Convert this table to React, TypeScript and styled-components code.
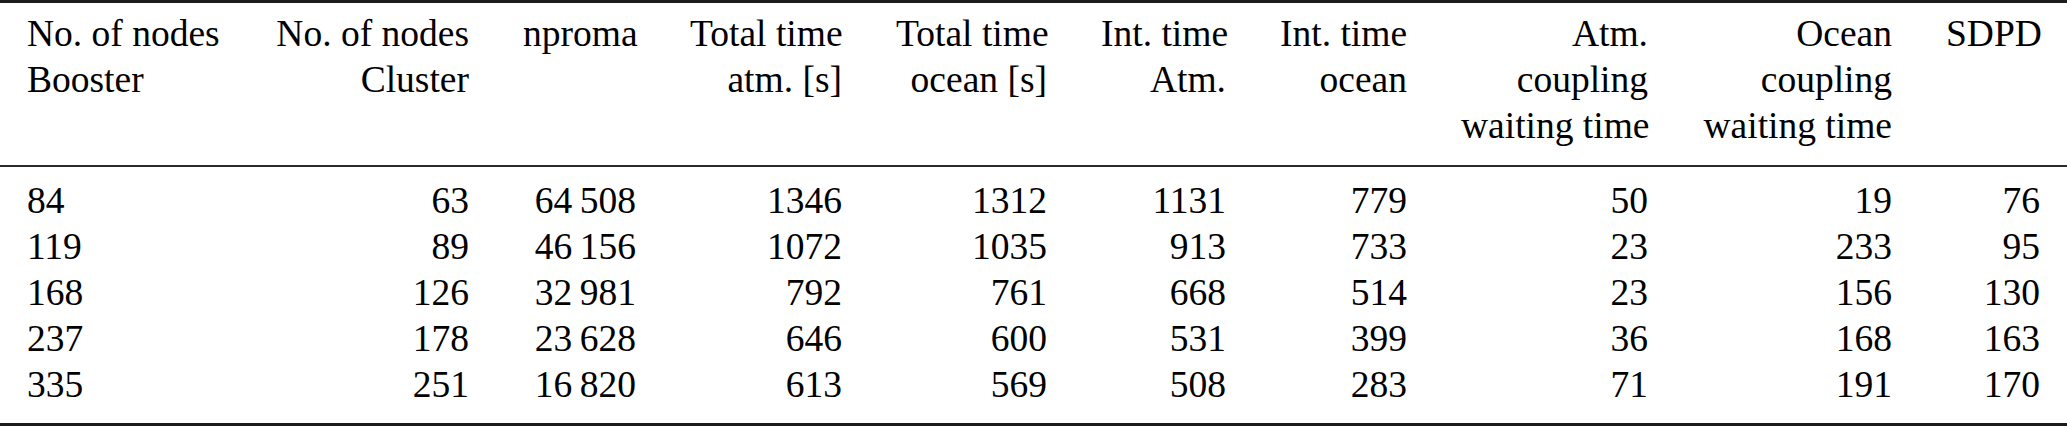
import React from 'react';
import styled, { createGlobalStyle } from 'styled-components';

const SERIF = '"Liberation Serif", "Times New Roman", serif';
const RULE = '#1c1c1c';

const GlobalStyle = createGlobalStyle`
  html, body {
    margin: 0;
    padding: 0;
    background: #ffffff;
    font-family: ${SERIF};
  }
`;

const Table = styled.table`
  width: 2067px;
  table-layout: fixed;
  border-collapse: separate;
  border-spacing: 0;
  border-top: 3px solid ${RULE};
  border-bottom: 3px solid ${RULE};
  font-family: ${SERIF};
  font-size: 37.5px;
  line-height: 46px;
  color: #000000;
`;

const HeadCell = styled.th<{ $align: 'left' | 'right' }>`
  font-weight: 400;
  vertical-align: top;
  text-align: ${(p) => p.$align};
  padding: 8.3px 27px 15.7px;
  border-bottom: 2px solid #2a2a2a;
  white-space: nowrap;
`;

const Cell = styled.td<{ $align: 'left' | 'right'; $first?: boolean; $last?: boolean }>`
  text-align: ${(p) => p.$align};
  padding: ${(p) => (p.$first ? '11px' : '0')} 27px ${(p) => (p.$last ? '15px' : '0')};
  white-space: nowrap;
`;

// column widths follow the right edges of each column in the print layout
const COLUMNS: { width: number; align: 'left' | 'right'; head: string[] }[] = [
  { width: 249, align: 'left', head: ['No. of nodes', 'Booster'] },
  { width: 247, align: 'right', head: ['No. of nodes', 'Cluster'] },
  { width: 167, align: 'right', head: ['nproma'] },
  { width: 206, align: 'right', head: ['Total time', 'atm. [s]'] },
  { width: 205, align: 'right', head: ['Total time', 'ocean [s]'] },
  { width: 179, align: 'right', head: ['Int. time', 'Atm.'] },
  { width: 181, align: 'right', head: ['Int. time', 'ocean'] },
  { width: 241, align: 'right', head: ['Atm.', 'coupling', 'waiting time'] },
  { width: 244, align: 'right', head: ['Ocean', 'coupling', 'waiting time'] },
  { width: 148, align: 'right', head: ['SDPD'] },
];

const ROWS = [
  [84, 63, 64508, 1346, 1312, 1131, 779, 50, 19, 76],
  [119, 89, 46156, 1072, 1035, 913, 733, 23, 233, 95],
  [168, 126, 32981, 792, 761, 668, 514, 23, 156, 130],
  [237, 178, 23628, 646, 600, 531, 399, 36, 168, 163],
  [335, 251, 16820, 613, 569, 508, 283, 71, 191, 170],
];

// siunitx style: group digits with a thin space from five digits on
function formatNumber(n: number) {
  const s = String(n);
  if (s.length < 5) return s;
  return s.replace(/\B(?=(\d{3})+(?!\d))/g, '\u2009');
}

function App() {
  return (
    <>
      <GlobalStyle />
      <Table>
        <colgroup>
          {COLUMNS.map((c, i) => (
            <col key={i} style={{ width: c.width }} />
          ))}
        </colgroup>
        <thead>
          <tr>
            {COLUMNS.map((c, i) => (
              <HeadCell key={i} $align={c.align}>
                {c.head.map((line, j) => (
                  <React.Fragment key={j}>
                    {j > 0 && <br />}
                    {line}
                  </React.Fragment>
                ))}
              </HeadCell>
            ))}
          </tr>
        </thead>
        <tbody>
          {ROWS.map((row, r) => (
            <tr key={r}>
              {row.map((value, i) => (
                <Cell
                  key={i}
                  $align={COLUMNS[i].align}
                  $first={r === 0}
                  $last={r === ROWS.length - 1}
                >
                  {formatNumber(value)}
                </Cell>
              ))}
            </tr>
          ))}
        </tbody>
      </Table>
    </>
  );
}

export default App;
